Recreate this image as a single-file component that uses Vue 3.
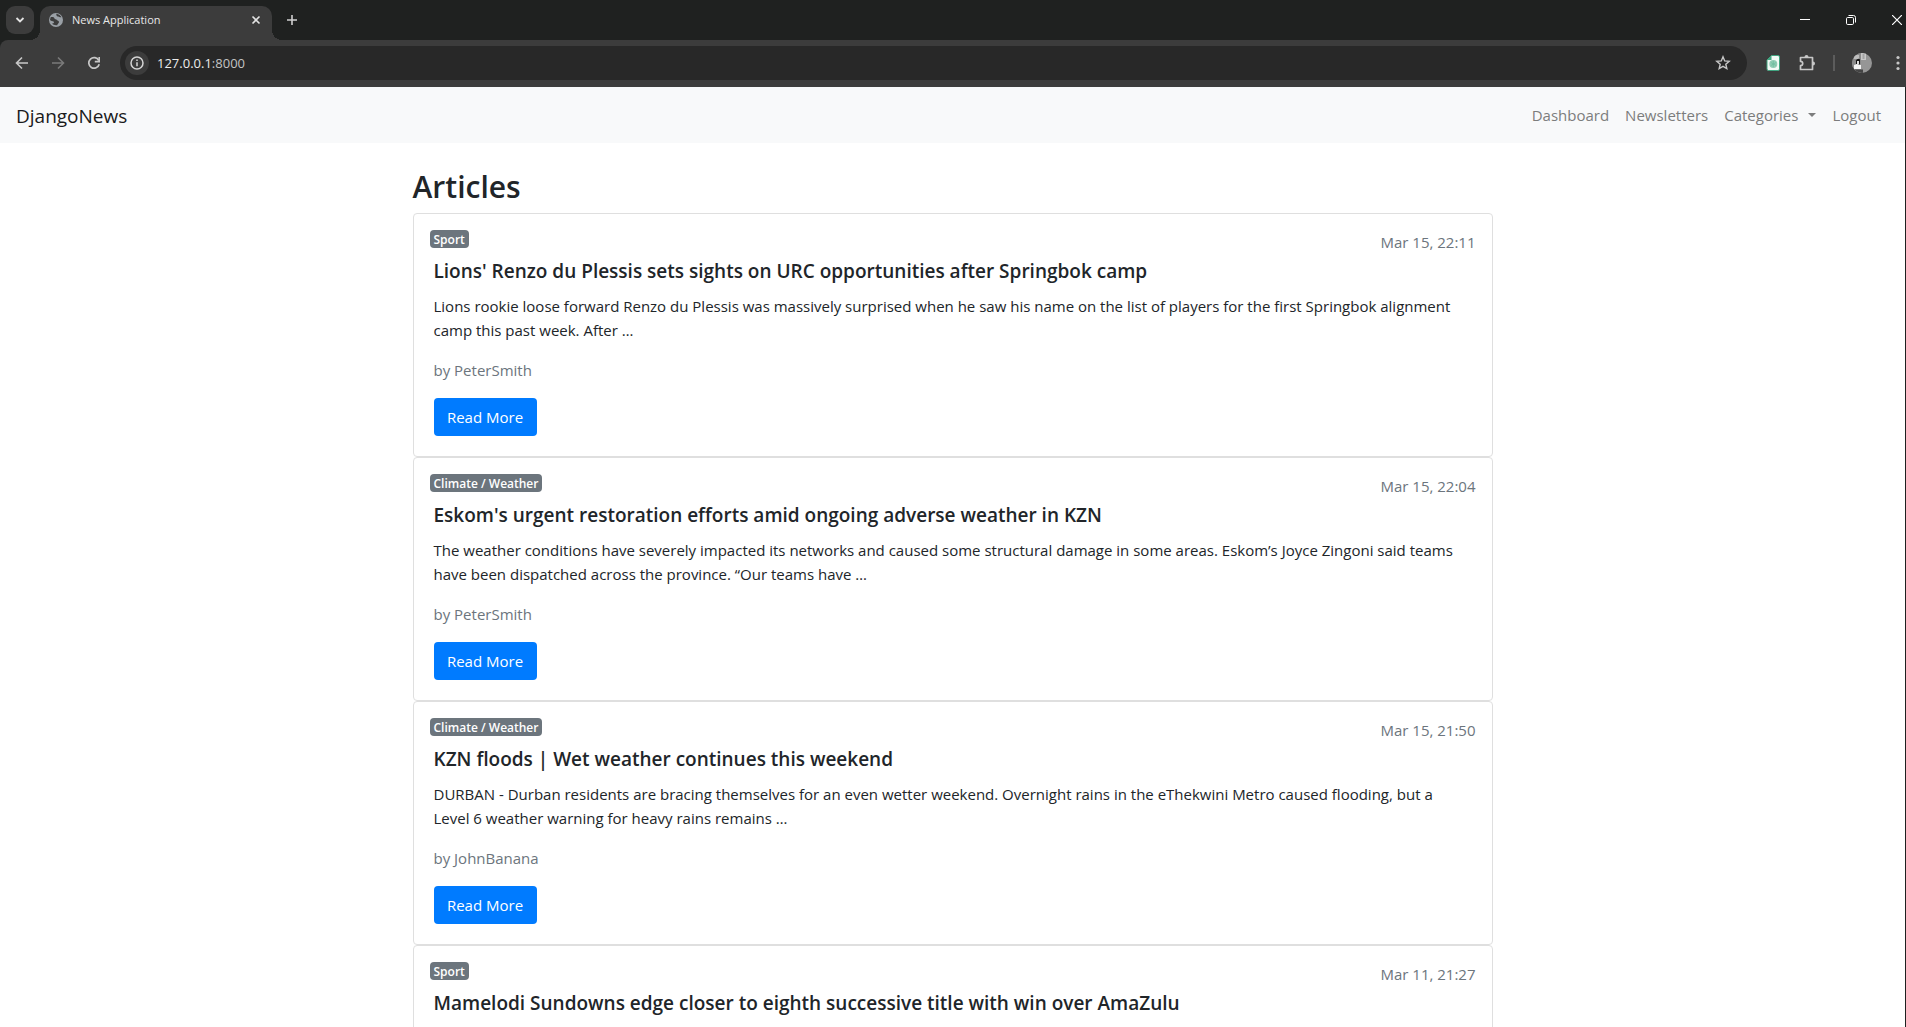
<script setup>
const links = [
  { label: 'Dashboard' },
  { label: 'Newsletters' },
  { label: 'Categories', menu: true },
  { label: 'Logout' },
]

const articles = [
  {
    category: 'Sport',
    date: 'Mar 15, 22:11',
    title: "Lions' Renzo du Plessis sets sights on URC opportunities after Springbok camp",
    lines: [
      'Lions rookie loose forward Renzo du Plessis was massively surprised when he saw his name on the list of players for the first Springbok alignment',
      'camp this past week. After …',
    ],
    author: 'PeterSmith',
  },
  {
    category: 'Climate / Weather',
    date: 'Mar 15, 22:04',
    title: "Eskom's urgent restoration efforts amid ongoing adverse weather in KZN",
    lines: [
      'The weather conditions have severely impacted its networks and caused some structural damage in some areas. Eskom’s Joyce Zingoni said teams',
      'have been dispatched across the province. “Our teams have …',
    ],
    author: 'PeterSmith',
  },
  {
    category: 'Climate / Weather',
    date: 'Mar 15, 21:50',
    title: 'KZN floods | Wet weather continues this weekend',
    lines: [
      'DURBAN - Durban residents are bracing themselves for an even wetter weekend. Overnight rains in the eThekwini Metro caused flooding, but a',
      'Level 6 weather warning for heavy rains remains …',
    ],
    author: 'JohnBanana',
  },
  {
    category: 'Sport',
    date: 'Mar 11, 21:27',
    title: 'Mamelodi Sundowns edge closer to eighth successive title with win over AmaZulu',
    lines: [],
    author: '',
  },
]
</script>

<template>
  <div class="window">
    <header class="tabstrip">
      <button class="tab-search" aria-label="Search tabs">
        <svg width="12" height="12" viewBox="0 0 12 12"><path d="M2.500 4l3.500 3.500 3.500-3.500" fill="none" stroke="#e3e3e3" stroke-width="1.800" /></svg>
      </button>
      <div class="tab">
        <svg width="16" height="16" viewBox="0 0 16 16">
          <circle cx="8" cy="8" r="7" fill="#9aa0a6" />
          <path d="M2.600 5.200C4 4.600 6.200 5 6.400 6.200 6.600 7.400 8.400 7 9 8 9.400 9 11 8.600 11 10 11 11.400 9.600 11.600 9.200 13.200 7.400 13.600 5 13 4 11.600 6 11.800 6.400 10.600 5.600 9.600 4.600 9 3.400 9.200 2 8z" fill="#3c3c3c" />
          <path d="M8.400 1.800C8 3.400 8.800 4.600 10.200 4.400 11 4.200 11.400 5.400 13.400 5.200 12.600 3.600 10.800 2.200 8.400 1.800z" fill="#3c3c3c" />
        </svg>
        <span class="tab-title">News Application</span>
        <button class="plain" aria-label="Close tab">
          <svg width="10" height="10" viewBox="0 0 10 10"><path d="M1.500 1.500l7 7M8.500 1.500l-7 7" stroke="#e3e3e3" stroke-width="1.600" /></svg>
        </button>
      </div>
      <button class="plain new-tab" aria-label="New tab">
        <svg width="12" height="12" viewBox="0 0 12 12"><path d="M6 1v10M1 6h10" stroke="#d0d0d0" stroke-width="1.600" /></svg>
      </button>
      <div class="window-buttons">
        <button class="plain" aria-label="Minimize"><svg width="10" height="10" viewBox="0 0 10 10"><path d="M0 4.500h10" stroke="#fff" /></svg></button>
        <button class="plain" aria-label="Restore"><svg width="10" height="10" viewBox="0 0 10 10"><g fill="none" stroke="#fff"><rect x=".5" y="2.500" width="7" height="7" rx="1.200" /><path d="M2.500.5h5a2 2 0 0 1 2 2v5" /></g></svg></button>
        <button class="plain" aria-label="Close"><svg width="10" height="10" viewBox="0 0 10 10"><path d="M0 0l10 10M10 0L0 10" stroke="#fff" stroke-width="1.200" /></svg></button>
      </div>
    </header>

    <div class="toolbar">
      <button class="plain tool" aria-label="Back"><svg width="16" height="16" viewBox="0 0 16 16"><path d="M14 8H3M8 2.500L2.500 8 8 13.500" fill="none" stroke="#c7c7c7" stroke-width="1.600" /></svg></button>
      <button class="plain tool" aria-label="Forward"><svg width="16" height="16" viewBox="0 0 16 16"><path d="M2 8h11M8 2.500L13.500 8 8 13.500" fill="none" stroke="#7a7a7a" stroke-width="1.600" /></svg></button>
      <button class="plain tool" aria-label="Reload"><svg width="16" height="16" viewBox="0 0 16 16"><path d="M12.800 5.500A5.300 5.300 0 1 0 13.200 9.200" fill="none" stroke="#c7c7c7" stroke-width="1.700" /><path d="M13.200 2v4.600H8.800" fill="none" stroke="#c7c7c7" stroke-width="1.600" /></svg></button>
      <div class="omnibox">
        <span class="site-info">
          <svg width="16" height="16" viewBox="0 0 16 16"><circle cx="8" cy="8" r="6" fill="none" stroke="#d5d5d5" stroke-width="1.500" /><path d="M8 7.200v4M8 4.600v1.500" stroke="#d5d5d5" stroke-width="1.500" /></svg>
        </span>
        <span class="url">127.0.0.1<span class="port">:8000</span></span>
        <button class="plain" aria-label="Bookmark this page"><svg width="16" height="16" viewBox="0 0 16 16"><path d="M8 1.800l1.700 4.100 4.500.4-3.400 2.900 1 4.400L8 11.300l-3.800 2.300 1-4.400L1.800 6.300l4.500-.4z" fill="none" stroke="#c7c7c7" stroke-width="1.400" /></svg></button>
      </div>
      <div class="extensions">
        <button class="plain" aria-label="Extension"><svg width="16" height="16" viewBox="0 0 16 16"><path d="M6.500.5H13a1.500 1.500 0 0 1 1.500 1.500v12a1.500 1.500 0 0 1-1.500 1.500H3.500A1.500 1.500 0 0 1 2 14V5z" fill="#f2faf6" stroke="#40a37f" /><path d="M2 5l4.500-4.500V5z" fill="#40a37f" /><circle cx="8.300" cy="9" r="4" fill="#8fccb4" /><path d="M6 7.500l5 3M11 7.500l-5 3M8.300 6v6" stroke="#6dbd9e" stroke-width=".7" /></svg></button>
        <button class="plain" aria-label="Extensions"><svg width="18" height="18" viewBox="0 0 18 18"><path d="M2.500 3.500h12v12h-12v-3.800a2.200 2.200 0 0 0 0-4.400z" fill="none" stroke="#c7c7c7" stroke-width="1.700" stroke-linejoin="round" /><path d="M6.500 3a2 2 0 0 1 4 0zM15 7.500a2 2 0 0 1 0 4z" fill="#c7c7c7" /></svg></button>
        <span class="divider"></span>
        <button class="plain" aria-label="Profile">
          <svg width="20" height="20" viewBox="0 0 20 20">
            <defs><clipPath id="face"><circle cx="10" cy="10" r="10" /></clipPath></defs>
            <g clip-path="url(#face)">
              <path d="M0 0h20v20H0z" fill="#969696" />
              <path d="M0 0h9v20H0z" fill="#8a8a8a" />
              <path d="M9 0h5v7H9z" fill="#c9c9c9" />
              <path d="M10.500 1h2v5h-2z" fill="#a4a4a4" />
              <path d="M2 2h5v4H2z" fill="#bdbdbd" />
              <path d="M4 11V7.500A2.500 2.500 0 0 1 8 6.500V12z" fill="#151515" />
              <path d="M2 12l3-1 4 1v4H2z" fill="#f4f4f4" />
              <path d="M5 8h2v3H5z" fill="#ddd" />
              <path d="M3 16.500h8V20H3z" fill="#444" />
            </g>
          </svg>
        </button>
        <button class="plain menu-button" aria-label="Menu"><svg width="4" height="16" viewBox="0 0 4 16"><g fill="#c7c7c7"><circle cx="2" cy="2.500" r="1.600" /><circle cx="2" cy="8" r="1.600" /><circle cx="2" cy="13.500" r="1.600" /></g></svg></button>
      </div>
    </div>

    <div class="page">
      <nav class="navbar">
        <a class="brand" href="#">DjangoNews</a>
        <div class="links">
          <a v-for="link in links" :key="link.label" href="#" :class="{ menu: link.menu }">{{ link.label }}</a>
        </div>
      </nav>

      <main class="container">
        <h2>Articles</h2>
        <article v-for="item in articles" :key="item.title" class="card">
          <div class="card-head">
            <span class="badge">{{ item.category }}</span>
            <span class="date">{{ item.date }}</span>
          </div>
          <div class="card-body">
            <h5>{{ item.title }}</h5>
            <template v-if="item.lines.length">
              <p class="excerpt"><span v-for="line in item.lines" :key="line">{{ line }}</span></p>
              <p class="author">by {{ item.author }}</p>
              <a class="read-more" href="#">Read More</a>
            </template>
          </div>
        </article>
      </main>
    </div>
  </div>
</template>

<style>
body {
  margin: 0;
  background: #fff;
}
</style>

<style scoped>
* {
  box-sizing: border-box;
}

.window {
  display: flex;
  flex-direction: column;
  height: 100vh;
  overflow: hidden;
  background: #1f2120;
  color: #212529;
  font-family: "Segoe UI", "Open Sans", "Noto Sans", sans-serif;
  font-size: 15px;
  line-height: 24px;
}

svg {
  display: block;
}

.plain {
  display: flex;
  align-items: center;
  justify-content: center;
  padding: 0;
  border: 0;
  background: none;
}

/* Tab strip */
.tabstrip {
  display: flex;
  flex: none;
  height: 40px;
  padding: 6px 4px 0 6px;
}

.tab-search {
  display: flex;
  align-items: center;
  justify-content: center;
  width: 28px;
  height: 28px;
  margin-right: 6px;
  padding: 0;
  border: 0;
  border-radius: 9px;
  background: #3c3c3c;
}

.tab {
  position: relative;
  display: flex;
  align-items: center;
  width: 232px;
  height: 34px;
  padding: 0 11px 6px 8px;
  border-radius: 10px 10px 0 0;
  background: #3c3c3c;
}

.tab::before,
.tab::after {
  content: "";
  position: absolute;
  bottom: 0;
  width: 10px;
  height: 10px;
}

.tab::before {
  right: 100%;
  background: radial-gradient(circle at 0 0, transparent 10px, #3c3c3c 10px);
}

.tab::after {
  left: 100%;
  background: radial-gradient(circle at 100% 0, transparent 10px, #3c3c3c 10px);
}

.tab-title {
  flex: 1;
  margin-left: 8px;
  color: #e8e8e8;
  font-size: 11px;
}

.new-tab {
  height: 28px;
  margin-left: 14px;
}

.window-buttons {
  display: flex;
  gap: 36px;
  height: 28px;
  margin-left: auto;
}

/* Toolbar */
.toolbar {
  display: flex;
  flex: none;
  align-items: center;
  height: 47px;
  padding: 0 6px 1px 4px;
  border-radius: 8px 0 0 0;
  background: #3c3c3c;
}

.tool {
  width: 36px;
  height: 34px;
}

.omnibox {
  display: flex;
  flex: 1;
  align-items: center;
  height: 34px;
  margin-left: 8px;
  padding: 0 16px 0 5px;
  border-radius: 17px;
  background: #282828;
}

.site-info {
  display: flex;
  align-items: center;
  justify-content: center;
  width: 24px;
  height: 24px;
  border-radius: 12px;
  background: #3c3c3c;
}

.url {
  flex: 1;
  margin-left: 8px;
  color: #ececec;
  font-size: 13px;
}

.port {
  color: #c4c4c4;
}

.extensions {
  display: flex;
  align-items: center;
  gap: 17px;
  margin-left: 18px;
}

.divider {
  width: 2px;
  height: 16px;
  background: #5c5c5c;
}

.menu-button {
  margin-left: 7px;
}

/* Page */
.page {
  flex: 1;
  min-height: 0;
  margin-right: 1px;
  overflow: hidden;
  background: #fff;
}

.navbar {
  display: flex;
  align-items: center;
  justify-content: space-between;
  height: 56px;
  padding: 0 24px 0 16px;
  background: #f8f9fa;
}

a {
  text-decoration: none;
}

.brand {
  color: #1a1b1c;
  font-size: 19px;
  padding-top: 1px;
}

.links {
  display: flex;
  gap: 16px;
}

.links a {
  color: #7c7d7d;
}

.menu::after {
  content: "";
  display: inline-block;
  margin-left: 10px;
  border: 4px solid transparent;
  border-top-color: currentColor;
  border-bottom: 0;
  vertical-align: 4px;
}

.container {
  width: 100%;
  max-width: 1110px;
  margin: 0 auto;
  padding: 25px 15px 0;
}

h2 {
  margin: 0 0 7px;
  font-size: 30px;
  font-weight: 600;
  line-height: 38px;
}

.card {
  padding: 16px 16px 20px;
  border: 1px solid #dfdfdf;
  border-radius: 4px;
}

.card-head {
  display: flex;
  align-items: flex-start;
  justify-content: space-between;
}

.badge {
  padding: 2px 4px 0;
  border-radius: 4px;
  background: #6c757d;
  color: #fff;
  font-size: 12px;
  font-weight: 600;
  line-height: 16px;
}

.date {
  color: #6c757d;
}

.card-body {
  padding: 5px 4px 0;
}

h5 {
  margin: 0 0 11px;
  font-size: 19px;
  font-weight: 600;
  line-height: 24px;
}

.excerpt {
  margin: 0 0 16px;
}

.excerpt span {
  display: block;
  white-space: nowrap;
}

.author {
  margin: 0 0 16px;
  color: #6c757d;
}

.read-more {
  display: block;
  width: fit-content;
  min-width: 103px;
  padding: 7px 12px;
  border-radius: 4px;
  background: #007bff;
  color: #fff;
  text-align: center;
}
</style>
